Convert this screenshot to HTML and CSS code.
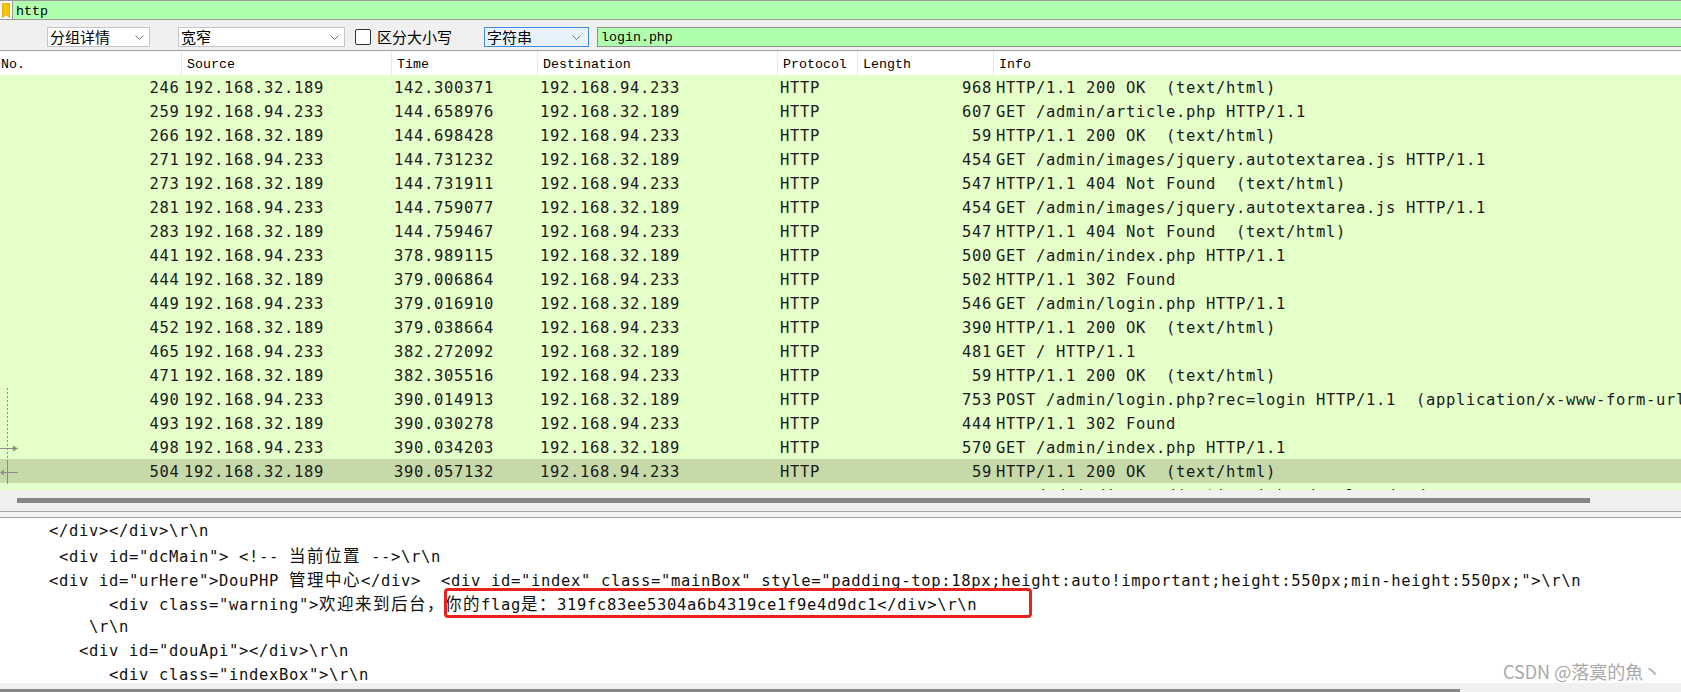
FILE: index.html
```html
<!DOCTYPE html>
<html lang="zh-CN">
<head>
<meta charset="utf-8">
<title>Wireshark</title>
<link rel="stylesheet" href="styles.css">
</head>
<body>
<div class="app">
  <div class="filterbar">
    <span class="bm"><svg width="8" height="15" viewBox="0 0 8 15"><path d="M0.5 0.5 H7.5 V14.5 L4 11.5 L0.5 14.5 Z" fill="#f6c400" stroke="#d9a400" stroke-width="0.8"/></svg></span>
    <div class="filter">http</div>
  </div>
  <div class="toolbar">
    <div class="combo c1"><span>分组详情</span><svg class="chev" width="9" height="5" viewBox="0 0 9 5"><path d="M0.5 0.5 L4.5 4.5 L8.5 0.5" fill="none" stroke="#707070" stroke-width="1"/></svg></div>
    <div class="combo c2"><span>宽窄</span><svg class="chev" width="9" height="5" viewBox="0 0 9 5"><path d="M0.5 0.5 L4.5 4.5 L8.5 0.5" fill="none" stroke="#707070" stroke-width="1"/></svg></div>
    <label class="chk"><span class="box"></span><span>区分大小写</span></label>
    <div class="combo c3"><span>字符串</span><svg class="chev" width="9" height="5" viewBox="0 0 9 5"><path d="M0.5 0.5 L4.5 4.5 L8.5 0.5" fill="none" stroke="#707070" stroke-width="1"/></svg></div>
    <div class="search">login.php</div>
  </div>
  <div class="phead">
    <div class="h first">No.</div>
    <div class="h">Source</div>
    <div class="h">Time</div>
    <div class="h">Destination</div>
    <div class="h">Protocol</div>
    <div class="h">Length</div>
    <div class="h">Info</div>
  </div>
  <div class="prows">
    <div class="row"><span class="no">246</span><span>192.168.32.189</span><span>142.300371</span><span>192.168.94.233</span><span>HTTP</span><span class="len">968</span><span>HTTP/1.1 200 OK  (text/html)</span></div>
    <div class="row"><span class="no">259</span><span>192.168.94.233</span><span>144.658976</span><span>192.168.32.189</span><span>HTTP</span><span class="len">607</span><span>GET /admin/article.php HTTP/1.1</span></div>
    <div class="row"><span class="no">266</span><span>192.168.32.189</span><span>144.698428</span><span>192.168.94.233</span><span>HTTP</span><span class="len">59</span><span>HTTP/1.1 200 OK  (text/html)</span></div>
    <div class="row"><span class="no">271</span><span>192.168.94.233</span><span>144.731232</span><span>192.168.32.189</span><span>HTTP</span><span class="len">454</span><span>GET /admin/images/jquery.autotextarea.js HTTP/1.1</span></div>
    <div class="row"><span class="no">273</span><span>192.168.32.189</span><span>144.731911</span><span>192.168.94.233</span><span>HTTP</span><span class="len">547</span><span>HTTP/1.1 404 Not Found  (text/html)</span></div>
    <div class="row"><span class="no">281</span><span>192.168.94.233</span><span>144.759077</span><span>192.168.32.189</span><span>HTTP</span><span class="len">454</span><span>GET /admin/images/jquery.autotextarea.js HTTP/1.1</span></div>
    <div class="row"><span class="no">283</span><span>192.168.32.189</span><span>144.759467</span><span>192.168.94.233</span><span>HTTP</span><span class="len">547</span><span>HTTP/1.1 404 Not Found  (text/html)</span></div>
    <div class="row"><span class="no">441</span><span>192.168.94.233</span><span>378.989115</span><span>192.168.32.189</span><span>HTTP</span><span class="len">500</span><span>GET /admin/index.php HTTP/1.1</span></div>
    <div class="row"><span class="no">444</span><span>192.168.32.189</span><span>379.006864</span><span>192.168.94.233</span><span>HTTP</span><span class="len">502</span><span>HTTP/1.1 302 Found</span></div>
    <div class="row"><span class="no">449</span><span>192.168.94.233</span><span>379.016910</span><span>192.168.32.189</span><span>HTTP</span><span class="len">546</span><span>GET /admin/login.php HTTP/1.1</span></div>
    <div class="row"><span class="no">452</span><span>192.168.32.189</span><span>379.038664</span><span>192.168.94.233</span><span>HTTP</span><span class="len">390</span><span>HTTP/1.1 200 OK  (text/html)</span></div>
    <div class="row"><span class="no">465</span><span>192.168.94.233</span><span>382.272092</span><span>192.168.32.189</span><span>HTTP</span><span class="len">481</span><span>GET / HTTP/1.1</span></div>
    <div class="row"><span class="no">471</span><span>192.168.32.189</span><span>382.305516</span><span>192.168.94.233</span><span>HTTP</span><span class="len">59</span><span>HTTP/1.1 200 OK  (text/html)</span></div>
    <div class="row"><span class="no">490</span><span>192.168.94.233</span><span>390.014913</span><span>192.168.32.189</span><span>HTTP</span><span class="len">753</span><span>POST /admin/login.php?rec=login HTTP/1.1  (application/x-www-form-urlencoded)</span></div>
    <div class="row"><span class="no">493</span><span>192.168.32.189</span><span>390.030278</span><span>192.168.94.233</span><span>HTTP</span><span class="len">444</span><span>HTTP/1.1 302 Found</span></div>
    <div class="row"><span class="no">498</span><span>192.168.94.233</span><span>390.034203</span><span>192.168.32.189</span><span>HTTP</span><span class="len">570</span><span>GET /admin/index.php HTTP/1.1</span></div>
    <div class="row sel"><span class="no">504</span><span>192.168.32.189</span><span>390.057132</span><span>192.168.94.233</span><span>HTTP</span><span class="len">59</span><span>HTTP/1.1 200 OK  (text/html)</span></div>
    <div class="row part"><span class="no"></span><span></span><span></span><span></span><span></span><span class="len"></span><span>    /admin/images/(action.js)  /   l   d  /</span></div>
    <svg class="rel" width="20" height="100" viewBox="0 0 20 100">
      <line x1="7.5" y1="0" x2="7.5" y2="72" stroke="#8c8c8c" stroke-dasharray="2 2"/>
      <line x1="7.5" y1="72" x2="7.5" y2="96" stroke="#8c8c8c"/>
      <line x1="0" y1="60.5" x2="14" y2="60.5" stroke="#8c8c8c"/>
      <path d="M13 57.5 L18 60.5 L13 63.5 Z" fill="#8c8c8c"/>
      <line x1="3" y1="84.5" x2="18" y2="84.5" stroke="#8c8c8c"/>
      <path d="M4 81.5 L0 84.5 L4 87.5 Z" fill="#8c8c8c"/>
    </svg>
  </div>
  <div class="hscroll"><div class="thumb"></div></div>
  <div class="split"></div>
  <div class="bytes">
    <div class="ln">    &lt;/div&gt;&lt;/div&gt;\r\n</div>
    <div class="ln">     &lt;div id="dcMain"&gt; &lt;!-- <span class="cj">当前位置</span> --&gt;\r\n</div>
    <div class="ln">    &lt;div id="urHere"&gt;DouPHP <span class="cj">管理中心</span>&lt;/div&gt;  &lt;div id="index" class="mainBox" style="padding-top:18px;height:auto!important;height:550px;min-height:550px;"&gt;\r\n</div>
    <div class="ln">          &lt;div class="warning"&gt;<span class="cj">欢迎来到后台，你的</span>flag<span class="cj">是：</span>319fc83ee5304a6b4319ce1f9e4d9dc1&lt;/div&gt;\r\n</div>
    <div class="ln">        \r\n</div>
    <div class="ln">       &lt;div id="douApi"&gt;&lt;/div&gt;\r\n</div>
    <div class="ln">          &lt;div class="indexBox"&gt;\r\n</div>
    <div class="mark"></div>
  </div>
  <div class="hscroll2"><div class="thumb2"></div></div>
  <div class="wm">CSDN @落寞的魚丶</div>
</div>
</body>
</html>
```

FILE: styles.css
```css
* { box-sizing: border-box; }
html, body { margin: 0; padding: 0; }
body {
  width: 1681px;
  height: 692px;
  overflow: hidden;
  background: #f0f0f0;
  font-family: "DejaVu Sans Mono", monospace;
}
.app {
  position: relative;
  width: 1681px;
  height: 692px;
  display: flex;
  flex-direction: column;
}

/* display filter */
.filterbar {
  height: 20px;
  flex: none;
  display: flex;
  background: #f7f7f7;
  border-top: 1px solid #9a9a9a;
  border-bottom: 1px solid #9a9a9a;
}
.bm {
  width: 13px;
  display: flex;
  align-items: center;
  justify-content: center;
  border-right: 1px solid #9a9a9a;
}
.filter {
  flex: 1;
  background: #afffaf;
  font: 13.3px/19px "Liberation Mono", monospace;
  padding: 1px 0 0 3px;
  color: #000;
  overflow: hidden;
}

/* find toolbar */
.toolbar {
  height: 30px;
  flex: none;
  display: flex;
  align-items: flex-start;
  padding-top: 7px;
  background: #f0f0f0;
}
.combo {
  height: 20px;
  background: #fff;
  border: 1px solid #c6c6c6;
  display: flex;
  align-items: center;
  justify-content: space-between;
  padding: 0 5px 0 2px;
  font: 15px/18px "Noto Sans CJK SC", sans-serif;
  color: #000;
}
.c1 { margin-left: 47px; width: 103px; }
.c2 { margin-left: 28px; width: 167px; }
.c3 { width: 105px; border-color: #3c8ddb; background: #e8f2fc; padding-right: 7px; }
.chev { flex: none; }
.chk {
  margin-left: 10px;
  width: 129px;
  height: 20px;
  display: flex;
  align-items: center;
  gap: 6px;
  font: 15px/18px "Noto Sans CJK SC", sans-serif;
  color: #000;
}
.box {
  width: 16px;
  height: 16px;
  border: 1px solid #333;
  border-radius: 2px;
  background: #fff;
}
.search {
  margin-left: 8px;
  flex: 1;
  height: 20px;
  background: #afffaf;
  border: 1px solid #8f8f8f;
  border-right: none;
  font: 13.3px/19px "Liberation Mono", monospace;
  padding-left: 3px;
  color: #000;
}

/* packet list */
.phead, .row {
  display: grid;
  grid-template-columns: 181px 210px 146px 240px 80px 136px 1fr;
  grid-template-rows: 24px;
}
.phead {
  height: 25px;
  flex: none;
  border-top: 1px solid #9d9d9d;
  background: #fff;
}
.h {
  border-left: 1px solid #e6e6e6;
  padding-left: 5px;
  font: 13.3px/28px "Liberation Mono", monospace;
  color: #000;
  white-space: pre;
  overflow: hidden;
}
.h.first { border-left: none; padding-left: 1px; }

.prows {
  position: relative;
  height: 415px;
  flex: none;
  overflow: hidden;
  background: #e4ffc7;
}
.row {
  height: 24px;
  font-size: 15.5px;
  line-height: 24px;
  letter-spacing: 0.67px;
  color: #1a1a1a;
  white-space: pre;
}
.row > span { overflow: hidden; padding-left: 3px; padding-top: 1px; }
.row > .no, .row > .len { text-align: right; padding-left: 0; }
.row > .no { padding-right: 1.5px; }
.row > .len { padding-right: 1px; }
.row.sel { background: #c6d9a8; }
.rel { position: absolute; left: 0; top: 313px; }

/* scrollbars & splitter */
.hscroll {
  height: 21px;
  flex: none;
  background: #f0f0f0;
  padding: 8px 91px 0 17px;
}
.thumb { height: 5px; background: #878787; }
.split {
  height: 7px;
  flex: none;
  border-top: 1px solid #a3a3a3;
  border-bottom: 1px solid #a3a3a3;
  background: #f4f4f4;
}

/* bytes pane */
.bytes {
  position: relative;
  height: 165px;
  flex: none;
  background: #fff;
  padding: 1px 0 0 9px;
  font-size: 15.5px;
  line-height: 24px;
  letter-spacing: 0.67px;
  color: #111;
  overflow: hidden;
}
.ln { height: 24px; white-space: pre; }
.cj {
  font-family: "Noto Sans CJK SC", sans-serif;
  font-size: 16.5px;
  letter-spacing: 1.5px;
}
.mark {
  position: absolute;
  left: 444px;
  top: 70px;
  width: 588px;
  height: 30px;
  border: 3px solid #e8231f;
  border-radius: 4px;
}
.hscroll2 {
  height: 9px;
  flex: none;
  background: #f0f0f0;
  padding-top: 6px;
}
.thumb2 { width: 1460px; height: 3px; background: #878787; }

/* watermark */
.wm {
  position: absolute;
  left: 1503px;
  top: 659px;
  font: 18px/24px "Noto Sans CJK SC", sans-serif;
  color: #a9a9a9;
  white-space: nowrap;
}
```
